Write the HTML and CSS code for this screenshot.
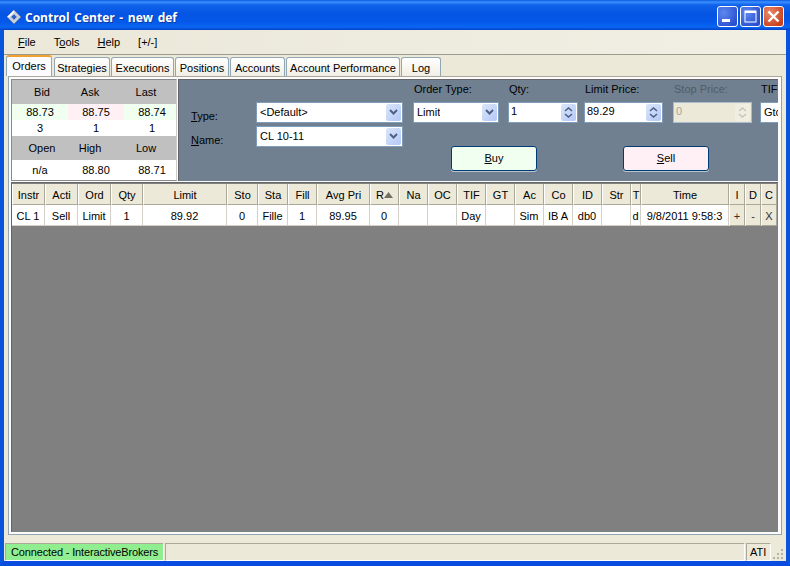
FILE: index.html
```html
<!DOCTYPE html>
<html lang="en">
<head>
<meta charset="utf-8">
<title>Control Center - new def</title>
<link rel="stylesheet" href="styles.css">
</head>
<body>
<div class="window">
  <header class="titlebar">
    <svg class="logo" width="16" height="16" viewBox="0 0 16 16"><path d="M8 1l7 7-7 7-7-7z" fill="#c9d0dc"/><path d="M8 1l7 7-7 7-7-7z" fill="none" stroke="#5a6f95" stroke-width=".6"/><path d="M8 5.2L10.8 8 8 10.8 5.2 8z" fill="#2f5fc4"/><path d="M8 1L1 8h2.5L8 3.5z" fill="#fff"/></svg>
    <span class="title">Control Center - new def</span>
    <div class="caption-buttons">
      <span class="cap cap-blue"><svg width="21" height="21" viewBox="0 0 21 21"><rect x="5" y="13" width="8" height="3" fill="#fff"/></svg></span>
      <span class="cap cap-blue"><svg width="21" height="21" viewBox="0 0 21 21"><rect x="5" y="5" width="11" height="11" fill="none" stroke="#fff"/><rect x="5" y="5" width="11" height="2" fill="#fff"/></svg></span>
      <span class="cap cap-red"><svg width="21" height="21" viewBox="0 0 21 21"><path d="M5.5 5.5l10 10M15.5 5.5l-10 10" stroke="#fff" stroke-width="2.4"/></svg></span>
    </div>
  </header>
  <nav class="menubar">
    <span class="menu"><u>F</u>ile</span>
    <span class="menu">T<u>o</u>ols</span>
    <span class="menu"><u>H</u>elp</span>
    <span class="menu">[+/-]</span>
  </nav>
  <div class="tabstrip">
    <span class="tab active tw-orders">Orders</span>
    <span class="tab tw-strat">Strategies</span>
    <span class="tab tw-exec">Executions</span>
    <span class="tab tw-pos">Positions</span>
    <span class="tab tw-acc">Accounts</span>
    <span class="tab tw-perf">Account Performance</span>
    <span class="tab tw-log">Log</span>
  </div>
  <main class="tabbody">
    <section class="toprow">
      <div class="quotes">
        <div class="qrow qhead"><span>Bid</span><span>Ask</span><span>Last</span></div>
        <div class="qrow qprices"><span class="green">88.73</span><span class="pink">88.75</span><span class="green">88.74</span></div>
        <div class="qrow qsizes"><span>3</span><span>1</span><span>1</span></div>
        <div class="qrow qhead"><span>Open</span><span>High</span><span>Low</span></div>
        <div class="qrow qvals"><span>n/a</span><span>88.80</span><span>88.71</span></div>
      </div>
      <div class="orderpanel">
        <div class="instrument">
          <div class="instr-row">
            <label class="side-label"><u>T</u>ype:</label>
            <div class="combo wide"><span class="val">&lt;Default&gt;</span><span class="drop"><svg width="9" height="7" viewBox="0 0 9 7"><path d="M1 1l3.5 3.5L8 1" fill="none" stroke="#4d6185" stroke-width="2"/></svg></span></div>
          </div>
          <div class="instr-row">
            <label class="side-label"><u>N</u>ame:</label>
            <div class="combo wide"><span class="val">CL 10-11</span><span class="drop"><svg width="9" height="7" viewBox="0 0 9 7"><path d="M1 1l3.5 3.5L8 1" fill="none" stroke="#4d6185" stroke-width="2"/></svg></span></div>
          </div>
        </div>
        <div class="ticket">
          <div class="fields">
            <div class="field f-type"><span class="flabel">Order Type:</span><div class="combo"><span class="val">Limit</span><span class="drop"><svg width="9" height="7" viewBox="0 0 9 7"><path d="M1 1l3.5 3.5L8 1" fill="none" stroke="#4d6185" stroke-width="2"/></svg></span></div></div>
            <div class="field f-qty"><span class="flabel">Qty:</span><div class="spin"><span class="val">1</span><span class="spinbtn"><svg width="9" height="5" viewBox="0 0 9 5"><path d="M1 4l3.5-3L8 4" fill="none" stroke="#4d6185" stroke-width="1.6"/></svg><svg width="9" height="5" viewBox="0 0 9 5"><path d="M1 1l3.5 3L8 1" fill="none" stroke="#4d6185" stroke-width="1.6"/></svg></span></div></div>
            <div class="field f-limit"><span class="flabel">Limit Price:</span><div class="spin"><span class="val">89.29</span><span class="spinbtn"><svg width="9" height="5" viewBox="0 0 9 5"><path d="M1 4l3.5-3L8 4" fill="none" stroke="#4d6185" stroke-width="1.6"/></svg><svg width="9" height="5" viewBox="0 0 9 5"><path d="M1 1l3.5 3L8 1" fill="none" stroke="#4d6185" stroke-width="1.6"/></svg></span></div></div>
            <div class="field f-stop disabled"><span class="flabel">Stop Price:</span><div class="spin"><span class="val">0</span><span class="spinbtn"><svg width="9" height="5" viewBox="0 0 9 5"><path d="M1 4l3.5-3L8 4" fill="none" stroke="#c9c7ba" stroke-width="1.6"/></svg><svg width="9" height="5" viewBox="0 0 9 5"><path d="M1 1l3.5 3L8 1" fill="none" stroke="#c9c7ba" stroke-width="1.6"/></svg></span></div></div>
            <div class="field f-tif"><span class="flabel">TIF:</span><div class="combo"><span class="val">Gtc</span></div></div>
          </div>
          <div class="actions">
            <button class="xpbtn buy" type="button"><u>B</u>uy</button>
            <button class="xpbtn sell" type="button"><u>S</u>ell</button>
          </div>
        </div>
      </div>
    </section>
    <section class="gridwrap">
      <div class="grid">
        <div class="th">Instr</div><div class="th">Acti</div><div class="th">Ord</div><div class="th">Qty</div><div class="th">Limit</div><div class="th">Sto</div><div class="th">Sta</div><div class="th">Fill</div><div class="th">Avg Pri</div><div class="th">R<svg class="sort" width="9" height="7" viewBox="0 0 9 7"><path d="M4.5 0L9 6H0z" fill="#716f64"/></svg></div><div class="th">Na</div><div class="th">OC</div><div class="th">TIF</div><div class="th">GT</div><div class="th">Ac</div><div class="th">Co</div><div class="th">ID</div><div class="th">Str</div><div class="th">T</div><div class="th">Time</div><div class="th">I</div><div class="th">D</div><div class="th">C</div>
        <div class="td">CL 1</div><div class="td">Sell</div><div class="td">Limit</div><div class="td">1</div><div class="td">89.92</div><div class="td">0</div><div class="td">Fille</div><div class="td">1</div><div class="td">89.95</div><div class="td">0</div><div class="td"></div><div class="td"></div><div class="td">Day</div><div class="td"></div><div class="td">Sim</div><div class="td">IB A</div><div class="td">db0</div><div class="td"></div><div class="td">d</div><div class="td">9/8/2011 9:58:3</div><div class="td tb">+</div><div class="td tb">-</div><div class="td tb">X</div>
      </div>
    </section>
  </main>
  <footer class="statusbar">
    <span class="st st-conn">Connected - InteractiveBrokers</span>
    <span class="st st-fill"></span>
    <span class="st st-ati">ATI</span>
    <svg class="grip" width="14" height="14" viewBox="0 0 14 14"><g fill="#b5b3a6"><rect x="10" y="2" width="2" height="2"/><rect x="6" y="6" width="2" height="2"/><rect x="10" y="6" width="2" height="2"/><rect x="2" y="10" width="2" height="2"/><rect x="6" y="10" width="2" height="2"/><rect x="10" y="10" width="2" height="2"/></g></svg>
  </footer>
</div>
</body>
</html>
```
FILE: styles.css
```css
* { box-sizing: border-box; }
html, body { margin: 0; padding: 0; }
body { width: 790px; height: 566px; overflow: hidden; font-family: "Liberation Sans", "Noto Sans", sans-serif; font-size: 11px; color: #000; }
u { text-decoration: underline; }

.window { width: 790px; height: 566px; display: flex; flex-direction: column; background: #ece9d8; border-left: 4px solid #0855dd; border-right: 4px solid #0855dd; border-bottom: 5px solid #0a4be0; }

.titlebar { height: 30px; margin: 0 -4px; padding: 3px 6px 0 6px; display: flex; align-items: center; gap: 3px; flex: none; color: #fff; background: linear-gradient(#0a5ae0 0, #3b8fff 2px, #0f62ea 5px, #0554e3 14px, #0558ea 22px, #0a66f2 27px, #0342c8 30px); }
.logo { flex: none; }
.title { font-family: "Open Sans", "Liberation Sans", sans-serif; font-weight: 700; font-size: 12px; letter-spacing: 0; word-spacing: 1.5px; margin-top: 1px; text-shadow: 1px 1px 0 #0c3a9e; }
.caption-buttons { margin-left: auto; display: flex; gap: 2px; }
.cap { width: 21px; height: 21px; border: 1px solid #fff; border-radius: 3px; display: block; overflow: hidden; }
.cap svg { display: block; margin: -1px; }
.cap-blue { background: radial-gradient(circle at 30% 30%, #5d88ee, #2a50d0 80%); }
.cap-red { background: radial-gradient(circle at 30% 30%, #e88a6c, #c8401c 80%); }

.menubar { height: 25px; flex: none; display: flex; align-items: center; padding: 0 0 1px 14px; gap: 18px; font-size: 11px; background: linear-gradient(90deg, #ebe8d9, #f1efe4); border-bottom: 1px solid #9b9a8c; }
.tabstrip { height: 21px; flex: none; display: flex; align-items: flex-end; padding-left: 2px; gap: 1px; }
.tab { height: 19px; padding-top: 1px; display: flex; align-items: center; justify-content: center; background: linear-gradient(#fff, #f0eee4); border: 1px solid #91a7b4; border-bottom: none; border-radius: 3px 3px 0 0; white-space: nowrap; }
.tab.active { height: 21px; margin-right: 1px; background: #fcfcfe; border: none; border-top: 2px solid #f0a030; border-left: 1px solid #91a7b4; border-right: 1px solid #91a7b4; padding: 0 0 2px; }
.tw-orders { width: 46px; }
.tw-strat { width: 56px; }
.tw-exec { width: 63px; }
.tw-pos { width: 54px; }
.tw-acc { width: 55px; }
.tw-perf { width: 114px; }
.tw-log { width: 40px; }

.tabbody { flex: 1; min-height: 0; margin: 0 4px; padding: 2px 3px 2px 2px; display: flex; flex-direction: column; background: #fcfcfe; border: 1px solid #91a7b4; border-top: 1px solid #aca899; overflow: hidden; }
.toprow { height: 102px; flex: none; display: flex; gap: 1px; }

.quotes { width: 166px; flex: none; display: flex; flex-direction: column; background: #fff; border: 1px solid #8a8a8a; border-right: 1px solid #ccc; overflow: hidden; }
.qrow { display: grid; grid-template-columns: 56px 56px 56px; align-items: center; text-align: center; }
.qhead { grid-template-columns: 60px 36px 76px; background: #c0c0c0; height: 24px; }
.qprices, .qsizes { height: 16px; }
.qvals { flex: 1; }
.qprices span { line-height: 16px; }
.green { background: #f0fff0; }
.pink { background: #fff0f5; }

.orderpanel { flex: 1; min-width: 0; display: flex; background: #708090; overflow: hidden; border-top: 1px solid #666; border-left: 1px solid #666; }
.instrument { width: 224px; flex: none; padding: 22px 0 0 11px; display: flex; flex-direction: column; gap: 3px; }
.instr-row { display: flex; height: 21px; }
.side-label { width: 66px; flex: none; padding: 8px 0 0 1px; }
.combo { height: 21px; background: #fff; border: 1px solid #7f9db9; display: flex; align-items: center; justify-content: space-between; padding: 1px; }
.val { padding-left: 2px; margin-top: -1px; white-space: nowrap; overflow: hidden; }
.wide { width: 147px; }
.drop { width: 15px; height: 17px; flex: none; display: flex; align-items: center; justify-content: center; background: linear-gradient(135deg, #dbe6fc, #b4c8f6); border-radius: 2px; }

.ticket { flex: 1; min-width: 0; padding-left: 10px; }
.fields { display: flex; }
.field { flex: none; display: flex; flex-direction: column; }
.flabel { height: 22px; line-height: 18px; white-space: nowrap; padding-left: 1px; }
.f-type { width: 86px; margin-right: 9px; }
.f-qty { width: 70px; margin-right: 6px; }
.f-limit { width: 79px; margin-right: 10px; }
.f-stop { width: 79px; margin-right: 8px; }
.f-tif { width: 60px; }
.spin { height: 21px; background: #fff; border: 1px solid #7f9db9; display: flex; align-items: center; justify-content: space-between; padding: 1px; }
.spin .val { padding-left: 1px; margin-top: -3px; }
.spinbtn { width: 15px; height: 17px; display: flex; flex-direction: column; align-items: center; justify-content: center; gap: 1px; background: linear-gradient(135deg, #dbe6fc, #b4c8f6); border-radius: 2px; }
.spinbtn svg { display: block; }
.disabled .flabel { color: #505c69; }
.disabled .spin { background: #ece9d8; color: #a8a699; border-color: #a9bdcf; }
.disabled .spinbtn { background: #f0eee2; }

.actions { display: flex; margin-top: 23px; padding-left: 38px; gap: 86px; }
.xpbtn { width: 86px; height: 25px; font: inherit; color: #000; border: 1px solid #003c74; border-radius: 3px; padding: 0 0 2px; box-shadow: 0 1px 0 #b8c4d0; }
.buy { background: #f0fff0; }
.sell { background: #fff0f5; }

.gridwrap { flex: 1; min-height: 0; margin-top: 1px; background: #808080; border-top: 1px solid #666; border-left: 1px solid #666; }
.grid { display: grid; grid-template-columns: 33px 33px 33px 32px 84px 31px 30px 29px 53px 29px 29px 29px 29px 29px 29px 29px 29px 29px 10px 88px 16px 16px 16px; grid-template-rows: 21px 21px; width: 766px; margin-top: 1px; }
.th { background: #ece9d8; padding-top: 2px; border-right: 1px solid #aca899; border-left: 1px solid #fff; border-bottom: 1px solid #aca899; display: flex; align-items: center; justify-content: center; white-space: nowrap; overflow: hidden; }
.td { background: #fff; padding-top: 1px; border-right: 1px solid #d4d0c8; border-bottom: 1px solid #d4d0c8; display: flex; align-items: center; justify-content: center; white-space: nowrap; overflow: hidden; }
.tb { background: #ece9d8; color: #333; border-right: 1px solid #aca899; border-left: 1px solid #fff; border-bottom: 1px solid #aca899; }
.sort { flex: none; }

.statusbar { height: 18px; flex: none; margin-top: 8px; display: flex; align-items: stretch; gap: 1px; padding-left: 1px; position: relative; }
.st { display: flex; align-items: center; white-space: nowrap; border: 1px solid; border-color: #aca899 #fff #fff #aca899; }
.st-conn { width: 159px; background: #90ee90; padding-left: 5px; letter-spacing: -.15px; }
.st-fill { width: 580px; }
.st-ati { width: 25px; padding-left: 3px; }
.grip { position: absolute; right: 1px; bottom: 0; }
```
